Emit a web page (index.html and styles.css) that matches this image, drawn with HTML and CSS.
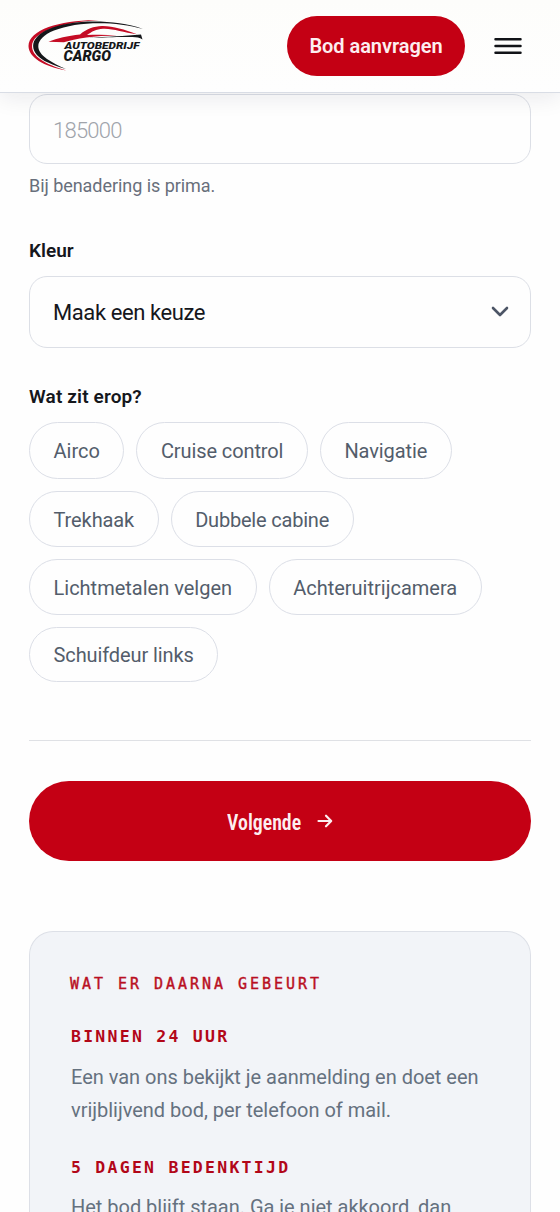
FILE: index.html
```
<!DOCTYPE html>
<html lang="nl">
<head>
<meta charset="utf-8">
<meta name="viewport" content="width=device-width, initial-scale=1">
<title>Autobedrijf Cargo</title>
<link rel="stylesheet" href="styles.css">
</head>
<body>
<header class="header">
  <svg class="logo" viewBox="28 16 118 58" role="img" aria-label="Autobedrijf Cargo">
    <path fill="#c50c25" d="M99 20.200C63 19.300 28.500 29 28.500 46c0 11 15 20.500 38 24.500C44 64 32 56 32 46 32 32 62 22 99 20.200z"/>
    <path fill="#15171a" d="M143 29C113 18.500 70 19.800 49 29 27 38.500 29 54 48 62.500c6 3 12 5 18 6.500-7-3-14-6.500-19-10C32.500 49 37 37.500 54 30.500c22-9 60-10 89-1.500z"/>
    <path fill="#c50c25" d="M48.500 41.800c9-3.800 19-5.800 31.500-7.300 6-5.500 14-8.300 22-8.500 11-.2 22 3.500 35 8.200-14-1.800-24-6-34-5.500-7 .4-11 2.800-16 6.300 9-.5 20-.5 30 .5-22 0-42 3-53 6.800z"/>
    <path fill="#15171a" d="M88 38c20-1.800 36-1.800 53-3.600l1.500 5c-3-1.800-6-2.200-10-2.300-12-.4-25 .2-44.500.9z"/>
    <text class="logo-text" x="64.500" y="48.800" font-size="9.800" textLength="75" lengthAdjust="spacingAndGlyphs">AUTOBEDRIJF</text>
    <text class="logo-text" x="63.500" y="61.200" font-size="13.800" textLength="47.500" lengthAdjust="spacingAndGlyphs">CARGO</text>
  </svg>
  <div class="header-actions">
    <a class="bid-button">Bod aanvragen</a>
    <svg class="menu" viewBox="0 0 28 18" aria-label="Menu"><path d="M1.500 2.200h25M1.500 9h25M1.500 15.800h25"/></svg>
  </div>
</header>
<main class="page">
  <div class="field mileage">185000</div>
  <p class="hint">Bij benadering is prima.</p>
  <h2 class="label">Kleur</h2>
  <div class="field select"><span>Maak een keuze</span>
    <svg class="chevron" viewBox="0 0 20 14"><path d="M3 3l7 7 7-7"/></svg>
  </div>
  <h2 class="label options-label">Wat zit erop?</h2>
  <div class="chips">
    <span class="chip chip-loose">Airco</span><span class="chip">Cruise control</span><span class="chip">Navigatie</span>
    <span class="chip">Trekhaak</span><span class="chip chip-tight">Dubbele cabine</span>
    <span class="chip chip-wide">Lichtmetalen velgen</span><span class="chip chip-wide">Achteruitrijcamera</span>
    <span class="chip">Schuifdeur links</span>
  </div>
  <hr class="divider">
  <button class="next"><span class="next-text">Volgende</span>
    <svg class="arrow" viewBox="0 0 16 16"><path d="M1.500 8h12.500M9 2.700L14.200 8 9 13.300"/></svg>
  </button>
  <section class="steps">
    <p class="eyebrow">WAT ER DAARNA GEBEURT</p>
    <h3 class="step-title">BINNEN 24 UUR</h3>
    <p class="step-text">Een van ons bekijkt je aanmelding en doet een<br>vrijblijvend bod, per telefoon of mail.</p>
    <h3 class="step-title">5 DAGEN BEDENKTIJD</h3>
    <p class="step-text">Het bod blijft staan. Ga je niet akkoord, dan</p>
  </section>
</main>
</body>
</html>
```
FILE: styles.css
```
* { box-sizing: border-box; }
body {
  margin: 0;
  height: 1212px;
  overflow: hidden;
  background: #fefefe;
  color: #15171c;
  font-family: Roboto, "Liberation Sans", sans-serif;
}
h2, h3, p { margin: 0; }

.header {
  position: relative;
  z-index: 1;
  display: flex;
  justify-content: space-between;
  height: 93px;
  padding: 16px 38px 0 28px;
  background: linear-gradient(#fdfdfb, #fefefe);
  border-bottom: 1px solid #d9dde5;
  box-shadow: 0 4px 22px rgba(20, 25, 40, .09);
}
.logo { width: 118px; height: 58px; }
.logo-text {
  font-family: Roboto, sans-serif;
  font-weight: 900;
  font-style: italic;
  fill: #15171a;
}
.header-actions { display: flex; align-items: center; height: 60px; gap: 29px; }
.bid-button {
  display: flex;
  align-items: center;
  justify-content: center;
  width: 178px;
  height: 60px;
  border-radius: 30px;
  background: #c40014;
  color: #fdeef0;
  font-size: 20px;
  font-weight: 600;
  letter-spacing: -.05px;
}
.menu { width: 28px; height: 18px; }
.menu path { stroke: #111317; stroke-width: 2.500; stroke-linecap: round; }

.page { padding: 0 29px; }
.field {
  display: flex;
  align-items: center;
  justify-content: space-between;
  border: 1px solid #dcdfe6;
  border-radius: 18px;
  padding: 0 20px 0 23px;
  font-size: 22px;
  letter-spacing: -.420px;
}
.mileage {
  height: 70px;
  margin-top: 1px;
  padding-top: 3px;
  color: #a0a4ab;
  font-weight: 350;
  letter-spacing: -.750px;
}
.hint {
  margin-top: 11px;
  font-size: 18px;
  line-height: 22px;
  letter-spacing: -.050px;
  color: #686f7b;
}
.label { margin-top: 42px; font-size: 19px; line-height: 24px; font-weight: 600; }
.select { height: 72px; margin-top: 13px; }
.chevron { width: 20px; height: 14px; fill: none; stroke: #4c5566; stroke-width: 2.600; stroke-linecap: round; stroke-linejoin: round; }
.options-label { margin-top: 37px; letter-spacing: .15px; }

.chips { display: flex; flex-wrap: wrap; gap: 12px; margin-top: 13px; }
.chip {
  display: flex;
  align-items: center;
  height: 55.800px;
  padding: 2px 23.500px 0;
  border: 1px solid #dcdfe7;
  border-radius: 29px;
  font-size: 20px;
  font-weight: 450;
  letter-spacing: -.1px;
  color: #535d6b;
}
.chip:nth-child(-n+3) { height: 57px; padding-top: 1px; }
.chip-loose { letter-spacing: 0; }
.chip-tight { letter-spacing: -.2px; }
.chip-wide { letter-spacing: 0; }

.divider { margin: 58px 0 40px; border: 0; border-top: 1px solid #dfe1e5; }
.next {
  display: flex;
  align-items: center;
  justify-content: center;
  gap: 12px;
  width: 100%;
  height: 80px;
  padding: 0;
  border: 0;
  border-radius: 40px;
  background: #c40014;
  color: #fdeef0;
}
.next-text {
  margin: 2px -4px 0;
  font: 600 22px Roboto, sans-serif;
  font-stretch: 75%;
  transform: scaleX(.9);
}
.arrow { width: 16px; height: 16px; margin-left: 3px; fill: none; stroke: #fdeef0; stroke-width: 2.200; stroke-linecap: round; stroke-linejoin: round; }

.steps {
  height: 281px;
  margin-top: 70px;
  padding: 40px 40px 0;
  border: 1px solid #dde0e7;
  border-bottom: 0;
  border-radius: 24px 24px 0 0;
  background: #f2f4f8;
}
.eyebrow, .step-title { font-family: "DejaVu Sans Mono", monospace; color: #b90f22; }
.eyebrow { font-size: 15px; line-height: 24px; letter-spacing: 2.970px; -webkit-text-stroke: .4px #b90f22; }
.step-title { margin-top: 29px; padding-left: 1px; font-size: 16.500px; line-height: 24px; font-weight: 700; letter-spacing: 2.250px; color: #b20718; }
.step-text { margin-top: 12px; padding-left: 1px; font-size: 20px; line-height: 33px; letter-spacing: -.02px; color: #65717f; white-space: nowrap; }
.step-text + .step-title { margin-top: 29px; }
.step-title:nth-of-type(2) + .step-text { margin-top: 11px; }
```
